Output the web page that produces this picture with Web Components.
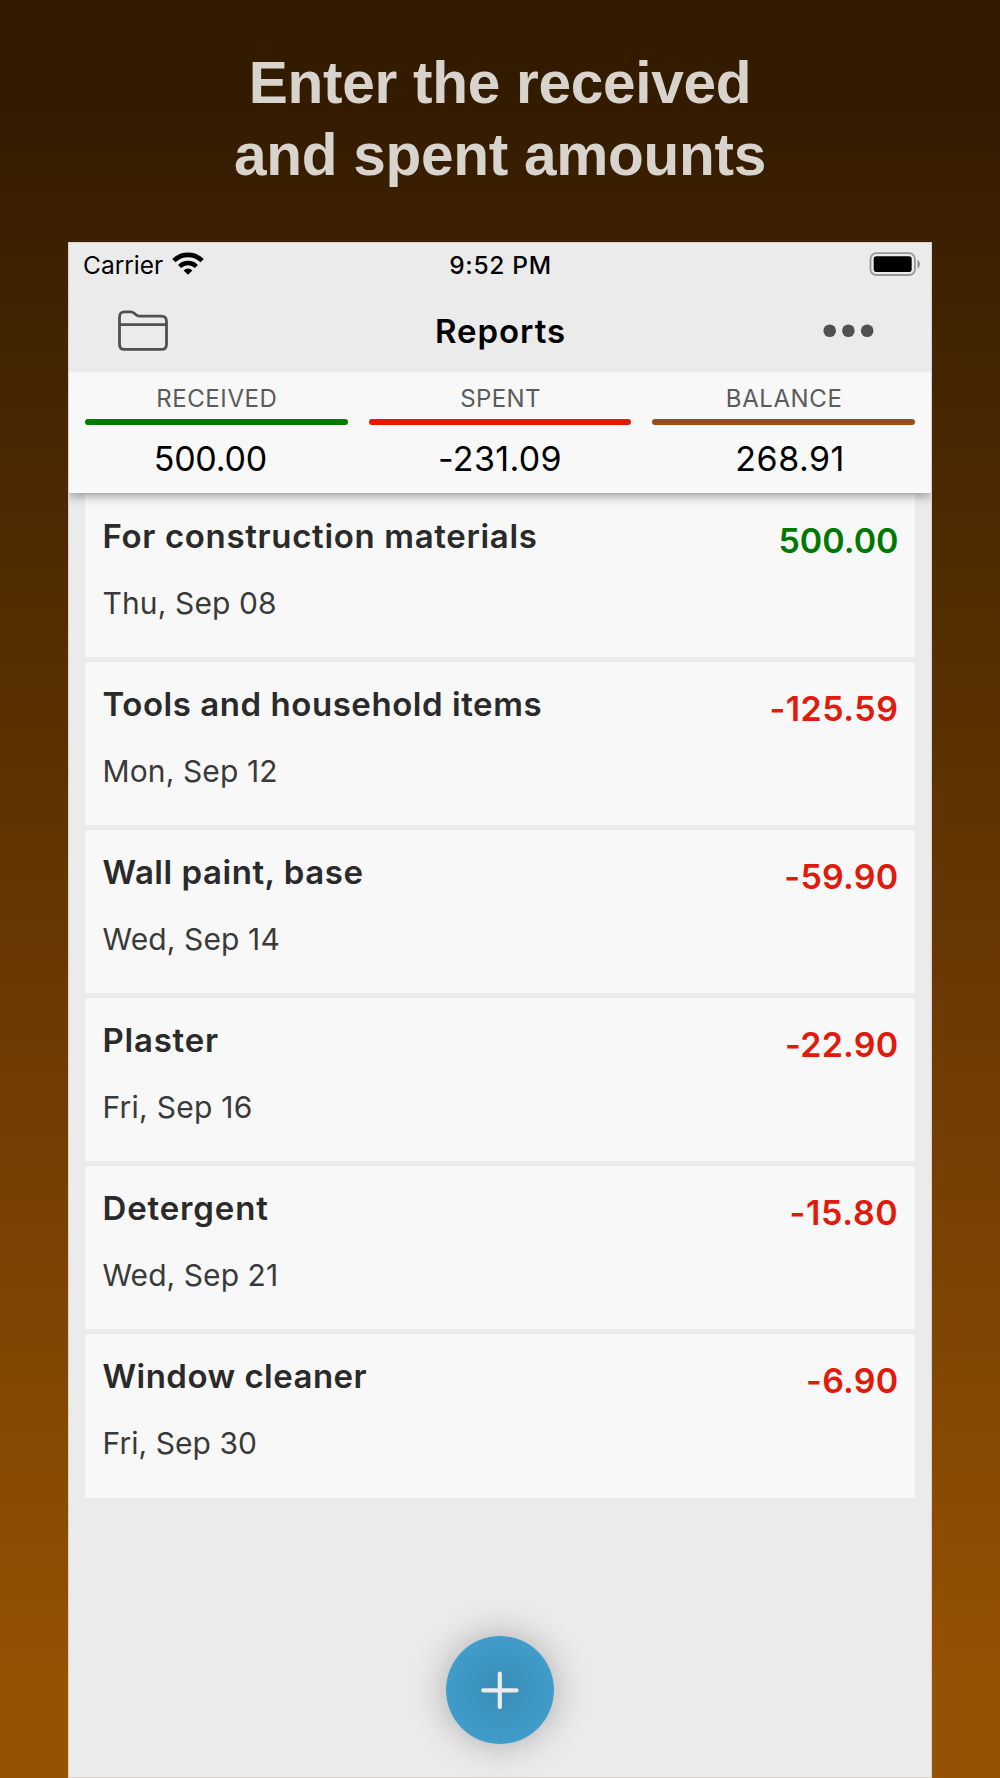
<!DOCTYPE html>
<html lang="en">
<head>
<meta charset="utf-8">
<title>Reports</title>
<style>
  html, body {
    margin: 0;
    height: 100%;
  }
  body {
    font-family: Inter, "Liberation Sans", sans-serif;
    overflow: hidden;
  }
</style>
</head>
<body>
<promo-page>
  <span slot="headline">Enter the received<br>and spent amounts</span>
  <phone-screen>
    <status-bar carrier="Carrier" time="9:52 PM"></status-bar>
    <nav-bar>Reports</nav-bar>
    <summary-bar>
      <summary-item label="RECEIVED" value="500.00" style="--color: #007d00; --label-track: 0.6px; --value-track: -0.2px; --pad-right: 12px"></summary-item>
      <summary-item label="SPENT" value="-231.09" style="--color: #e61900; --label-track: 0.4px; --value-track: 0.34px"></summary-item>
      <summary-item label="BALANCE" value="268.91" style="--color: #994d1a; --label-track: 0.6px; --value-track: 0.5px; --pad-left: 13px"></summary-item>
    </summary-bar>
    <report-list>
      <report-entry date="Thu, Sep 08" amount="500.00" style="--track: 0.66px; --amount-track: 0px">For construction materials</report-entry>
      <report-entry date="Mon, Sep 12" amount="-125.59" style="--track: 0.55px; --amount-track: 0.5px">Tools and household items</report-entry>
      <report-entry date="Wed, Sep 14" amount="-59.90" style="--track: 0.54px">Wall paint, base</report-entry>
      <report-entry date="Fri, Sep 16" amount="-22.90" style="--track: 0.78px; --date-track: 0.25px">Plaster</report-entry>
      <report-entry date="Wed, Sep 21" amount="-15.80" style="--track: 0.85px; --date-track: 0.06px; --amount-track: 0.7px">Detergent</report-entry>
      <report-entry date="Fri, Sep 30" amount="-6.90" style="--track: 0.46px; --date-track: 0.05px">Window cleaner</report-entry>
    </report-list>
    <add-button></add-button>
  </phone-screen>
</promo-page>

<script>
// Every element renders its template into an open shadow root
class BaseElement extends HTMLElement {
  constructor() {
    super();
    this.attachShadow({ mode: 'open' });
  }

  connectedCallback() {
    let templ = document.createElement('template');
    templ.innerHTML = this.template();
    this.shadowRoot.appendChild(templ.content.cloneNode(true));
  }

  attr(name) {
    return this.getAttribute(name) || '';
  }
}

class PromoPage extends BaseElement {
  template() {
    return `
<style>
    :host {
      display: flex;
      flex-direction: column;
      align-items: center;
      box-sizing: border-box;
      height: 1778px;
      padding-top: 47px;
      background: linear-gradient(#331b00 5%, #965104 95%);
    }
    h1 {
      margin: 0 0 51px;
      font: 700 58.6px/72px "Liberation Sans", Arial, sans-serif;
      letter-spacing: -0.3px;
      text-align: center;
      color: #d8d4cd;
    }
</style>
<h1><slot name="headline"></slot></h1>
<slot></slot>`;
  }
}

class PhoneScreen extends BaseElement {
  template() {
    return `
<style>
    :host {
      display: flex;
      flex-direction: column;
      box-sizing: border-box;
      width: 864px;
      flex: 1;
      border: 1px solid #d8d1c9;
      background: #ebebeb;
      overflow: hidden;
    }
</style>
<slot></slot>`;
  }
}

class StatusBar extends BaseElement {
  template() {
    return `
<style>
    :host {
      display: grid;
      grid-template-columns: 1fr auto 1fr;
      box-sizing: border-box;
      height: 46px;
      padding: 7px 10px 0 14px;
      font-size: 24.5px;
      line-height: 30px;
      color: #000;
    }
    .left {
      display: flex;
      gap: 9px;
    }
    .time {
      font-weight: 500;
      letter-spacing: 0.7px;
      margin-right: 3px;
    }
    .wifi {
      margin-top: 2px;
    }
    .battery {
      margin-top: 2px;
      justify-self: end;
    }
</style>
<div class="left">
  <span>${this.attr('carrier')}</span>
  <svg class="wifi" width="32" height="24" viewBox="0 0 32 24" fill="none" stroke="#000" stroke-width="4.6">
    <path d="M1.8 8.7A20.1 20.1 0 0 1 30.2 8.7"/>
    <path d="M7.6 14.5A12 12 0 0 1 24.4 14.5" stroke-width="4.4"/>
    <path d="M16 22.8L11.6 18.4A6.2 6.2 0 0 1 20.4 18.4Z" fill="#000" stroke="none"/>
  </svg>
</div>
<span class="time">${this.attr('time')}</span>
<svg class="battery" width="52" height="24" viewBox="0 0 52 24">
  <rect x="1.5" y="1.2" width="44.4" height="21.8" rx="5.8" fill="none" stroke="#979797" stroke-width="1.8"/>
  <rect x="4.7" y="4.2" width="38" height="15.8" rx="2.8" fill="#000"/>
  <path d="M48.6 7.8c2.8 1.2 2.8 7.4 0 8.6z" fill="#858585"/>
</svg>`;
  }
}

class NavBar extends BaseElement {
  template() {
    return `
<style>
    :host {
      display: flex;
      align-items: center;
      justify-content: space-between;
      box-sizing: border-box;
      height: 83px;
      padding: 0 57px 0 49px;
      color: #000;
    }
    .title {
      font-size: 33px;
      font-weight: 600;
      line-height: 40px;
      letter-spacing: 0.95px;
      margin-left: 10px;
    }
    svg {
      display: block;
    }
</style>
<svg width="50" height="41" viewBox="0 0 50 41" fill="none" stroke="#505050" stroke-width="2.8" stroke-linejoin="round">
  <path d="M1.5 34.5V7.2Q1.5 1.8 6.6 1.8H12.6Q14.6 1.8 16 3L18.2 5.1Q19.4 6.2 21.2 6.2H43.4Q48.5 6.2 48.5 11.3V34.5Q48.5 39.4 43.6 39.4H6.4Q1.5 39.4 1.5 34.5Z"/>
  <path d="M1.5 14.7H48.5"/>
</svg>
<span class="title"><slot></slot></span>
<svg width="51" height="14" viewBox="0 0 51 14" fill="#505050">
  <circle cx="6.7" cy="6.8" r="6.3"/>
  <circle cx="25.4" cy="6.8" r="6.3"/>
  <circle cx="44.2" cy="6.8" r="6.3"/>
</svg>`;
  }
}

class SummaryBar extends BaseElement {
  template() {
    return `
<style>
    :host {
      display: grid;
      grid-template-columns: repeat(3, 1fr);
      gap: 21px;
      box-sizing: border-box;
      height: 121px;
      padding: 11px 16px 0;
      background: #f8f8f8;
      box-shadow: 0 2px 11px rgba(0, 0, 0, 0.45);
      /* keep the shadow below the bar only */
      clip-path: inset(0 0 -20px 0);
      position: relative;
      z-index: 1;
    }
</style>
<slot></slot>`;
  }
}

class SummaryItem extends BaseElement {
  template() {
    return `
<style>
    :host {
      display: block;
      text-align: center;
    }
    .label {
      font-size: 24px;
      line-height: 30px;
      letter-spacing: var(--label-track);
      padding: 1px 0 0 1px;
      color: #5b5b5b;
    }
    .line {
      height: 6px;
      margin: 5px 0 14px;
      border-radius: 3px;
      background: var(--color);
    }
    .value {
      font-size: 34px;
      line-height: 40px;
      letter-spacing: var(--value-track);
      padding: 0 var(--pad-right, 0px) 0 var(--pad-left, 0px);
      color: #000;
    }
</style>
<div class="label">${this.attr('label')}</div>
<div class="line"></div>
<div class="value">${this.attr('value')}</div>`;
  }
}

class ReportList extends BaseElement {
  template() {
    return `
<style>
    :host {
      display: flex;
      flex-direction: column;
      gap: 5px;
      padding: 1px 16px 0;
    }
    ::slotted(:last-child) {
      height: 164px;
    }
</style>
<slot></slot>`;
  }
}

class ReportEntry extends BaseElement {
  template() {
    let color = this.attr('amount').startsWith('-') ? '#e01b0c' : '#007800';
    return `
<style>
    :host {
      display: flex;
      justify-content: space-between;
      box-sizing: border-box;
      height: 163px;
      padding: 22px 16.5px 0 17.5px;
      background: #f8f8f8;
    }
    .title {
      font-size: 33px;
      font-weight: 600;
      line-height: 40px;
      letter-spacing: var(--track);
      color: #2a2a2a;
    }
    .date {
      margin-top: 29px;
      font-size: 30px;
      line-height: 36px;
      letter-spacing: var(--date-track, 0.12px);
      color: #3a3a3a;
    }
    .amount {
      margin-top: 5px;
      font-size: 34px;
      font-weight: 600;
      line-height: 40px;
      letter-spacing: var(--amount-track, 0.25px);
      color: ${color};
    }
</style>
<div>
  <div class="title"><slot></slot></div>
  <div class="date">${this.attr('date')}</div>
</div>
<div class="amount">${this.attr('amount')}</div>`;
  }
}

class AddButton extends BaseElement {
  template() {
    return `
<style>
    :host {
      display: flex;
      justify-content: center;
      margin: auto 0 33px;
    }
    button {
      display: flex;
      align-items: center;
      justify-content: center;
      width: 108px;
      height: 108px;
      padding: 0;
      border: 0;
      border-radius: 50%;
      background: radial-gradient(circle closest-side, #388db5 0%, #3d96c2 60%, #419cca 100%);
      box-shadow: 0 0 36px rgba(0, 0, 0, 0.28);
      cursor: pointer;
    }
</style>
<button aria-label="Add">
  <svg width="38" height="38" viewBox="0 0 38 38" stroke="#ebebeb" stroke-width="4.2" stroke-linecap="round">
    <path d="M2.2 19.3H35.6M18.8 2.6V36"/>
  </svg>
</button>`;
  }
}

customElements.define('promo-page', PromoPage);
customElements.define('phone-screen', PhoneScreen);
customElements.define('status-bar', StatusBar);
customElements.define('nav-bar', NavBar);
customElements.define('summary-bar', SummaryBar);
customElements.define('summary-item', SummaryItem);
customElements.define('report-list', ReportList);
customElements.define('report-entry', ReportEntry);
customElements.define('add-button', AddButton);
</script>
</body>
</html>
